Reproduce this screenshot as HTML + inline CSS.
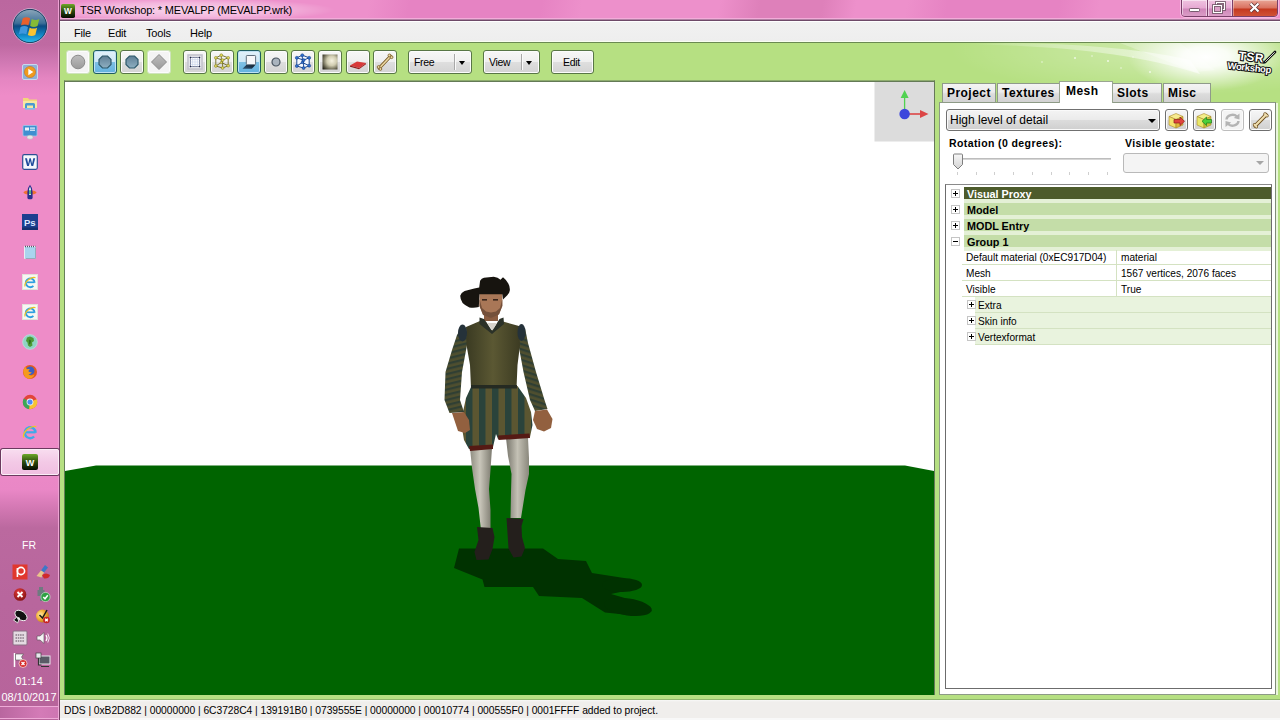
<!DOCTYPE html>
<html lang="en">
<head>
<meta charset="utf-8">
<title>TSR Workshop: * MEVALPP (MEVALPP.wrk)</title>
<style>
*{box-sizing:border-box;margin:0;padding:0}
html,body{width:1280px;height:720px;overflow:hidden;background:#fff}
body{position:relative;font-family:"Liberation Sans",sans-serif;font-size:12px;color:#000}
.abs{position:absolute}
/* taskbar */
#taskbar{position:absolute;left:0;top:0;width:59px;height:720px;
 background:linear-gradient(180deg,#bb679f 0px,#bf6aa2 45px,#d078b3 62px,#e485c1 78px,#ee8cc8 95px,#ee8cc8 440px,#e987c6 490px,#d378b3 508px,#bb699f 528px,#b8669d 600px,#b7649b 720px);}
#tbline{position:absolute;left:58px;top:0;width:2px;height:720px;background:linear-gradient(90deg,#eda2d3 0,#eda2d3 50%,#744065 50%,#744065 100%)}
/* window */
#titlebar{position:absolute;left:60px;top:0;width:1220px;height:20px;background:linear-gradient(100deg,#ed90cb 0px,#ed90cb 305px,#e683c3 345px,#e683c3 475px,#ed90cb 515px,#ed90cb 650px,#de80ba 690px,#de80ba 752px,#ed90cb 785px,#ed90cb 835px,#e683c3 875px,#e683c3 985px,#ed90cb 1025px,#ed90cb 1220px)}
#titleglow{position:absolute;left:60px;top:0;width:330px;height:19px;background:radial-gradient(ellipse 150px 12px at 125px 10px,rgba(255,255,255,.62),rgba(255,255,255,.35) 60%,rgba(255,255,255,0))}
#titleline{position:absolute;left:60px;top:18px;width:1220px;height:3px;background:linear-gradient(180deg,#f2acd9 0,#f2acd9 33.3%,#b07fa3 33.3%,#b07fa3 66.6%,#6e4a68 66.6%,#6e4a68 100%)}
#title{position:absolute;left:80px;top:3px;font-size:11px;line-height:14px;white-space:nowrap;letter-spacing:-0.19px}
#menubar{position:absolute;left:60px;top:21px;width:1220px;height:21px;background:linear-gradient(180deg,#f1f1f1,#eeeeee);border-top:1px solid #fff;border-bottom:1px solid #f8fff0}
.menu{position:absolute;top:26px;font-size:11px;line-height:14px;letter-spacing:-0.2px}
#toolbar{position:absolute;left:60px;top:42px;width:1220px;height:39px;background:#b6e082;border-top:1px solid #6a8a52}
#frameL{position:absolute;left:60px;top:43px;width:4px;height:657px;background:#b6e082}
#work{position:absolute;left:60px;top:81px;width:1220px;height:619px;background:#b6e082}
#statusbar{position:absolute;left:60px;top:699px;width:1220px;height:21px;background:linear-gradient(180deg,#f8f8f7 0,#f0eeec 2px,#f0eeec 100%);border-top:1px solid #8fb56c}
#status{position:absolute;left:64px;top:704px;font-size:10.3px;line-height:13px;white-space:nowrap;letter-spacing:-0.05px}

/* right panel */
.tab{position:absolute;top:83px;height:19px;border:1px solid #8f9a8a;border-bottom:none;background:linear-gradient(180deg,#f4f4f4 0,#ebebeb 45%,#dcdcdc 55%,#d2d2d2 100%);font-weight:bold;font-size:12px;letter-spacing:.45px;line-height:15px;padding-top:2px;padding-left:4px;text-align:left;white-space:nowrap}
.tab.sel{top:81px;height:22px;background:#fff;padding-top:2px;padding-left:6px;z-index:3;border-color:#9aa592}
#panel{position:absolute;left:939px;top:102px;width:337px;height:593px;background:#fff;border:1px solid #8d9a86;border-right-color:#7f8c78}
.ibtn{position:absolute;top:109px;width:23px;height:22px;border:1px solid #6f6f6f;border-radius:3px;background:linear-gradient(180deg,#f6f6f6 0,#ececec 48%,#dddddd 52%,#d0d0d0 100%);box-shadow:inset 0 0 0 1px #fbfbfb}
.lbl{position:absolute;font-weight:bold;font-size:10.5px;letter-spacing:.4px;line-height:13px;white-space:nowrap}
#tree{position:absolute;left:945px;top:184px;width:327px;height:505px;border:1px solid #6c6c6c;border-top-color:#8a8a8a;background:#fff}
.trow{position:absolute;left:964px;width:307px;height:16px}
.trow .bar{position:absolute;left:0;top:1px;right:0;height:12px;background:#c4dda8}
.trow .lo{position:absolute;left:0;top:13px;right:0;height:4px;background:#e4f0d6}
.trow span{position:absolute;left:3px;top:1.500px;font-weight:bold;font-size:10.8px;line-height:13px;white-space:nowrap}
.pm{position:absolute;width:9px;height:9px;border:1px solid #c5c5c5;background:#fff}
.pm:before{content:"";position:absolute;left:1px;top:3px;width:5px;height:1px;background:#000}
.pm.plus:after{content:"";position:absolute;left:3px;top:1px;width:1px;height:5px;background:#000}
.cell{position:absolute;font-size:10.1px;line-height:13px;white-space:nowrap}
.gl{position:absolute;height:1px;background:#d4e2c2}
.sub{position:absolute;left:975px;width:296px;height:15px;background:#e9f3de}

/* toolbar buttons */
.tb{position:absolute;top:50px;width:24px;height:24px;border:1px solid #587646;border-radius:3px;background:linear-gradient(180deg,#f7f7f7 0,#efefef 48%,#dedede 52%,#d3d3d3 100%);box-shadow:inset 0 0 0 1px #fcfcfc}
.tb.flat{border-color:#cfe3bd;background:#f4f4f4}
.tb.on{border-color:#1f5c60;background:linear-gradient(180deg,#e2f1fa 0,#cfe8f6 48%,#7fc0e4 52%,#62b2e0 100%);box-shadow:inset 0 0 0 1px #bfe1f3}
.tb svg{position:absolute;left:0;top:0}
.dd{position:absolute;top:50px;height:24px;border:1px solid #587646;border-radius:3px;background:linear-gradient(180deg,#f7f7f7 0,#efefef 48%,#dedede 52%,#d3d3d3 100%);box-shadow:inset 0 0 0 1px #fcfcfc;font-size:10.5px;line-height:14px;letter-spacing:-0.3px}
.dd span{position:absolute;left:5px;top:4px}
.dd i{position:absolute;top:3px;width:1px;height:16px;background:#a8a8a8;box-shadow:1px 0 0 #fafafa}
.dd b{position:absolute;top:10px;width:0;height:0;border-left:3.5px solid transparent;border-right:3.5px solid transparent;border-top:4px solid #000}

.ti{position:absolute;left:22px;width:16px;height:16px}
.tray{position:absolute;width:16px;height:16px}
.tx{position:absolute;left:0;width:58px;text-align:center;color:#fff;font-size:11px;line-height:13px;white-space:nowrap}
</style>
</head>
<body>
<div id="taskbar"></div>
<div id="tbline"></div>
<!-- taskbar content -->
<svg class="abs" style="left:11px;top:7px" width="38" height="38" viewBox="0 0 38 38"><defs><linearGradient id="orb" x1="0" y1="0" x2="0" y2="1"><stop offset="0" stop-color="#8fa9bb"/><stop offset=".42" stop-color="#3c6f98"/><stop offset=".5" stop-color="#0b4a82"/><stop offset=".8" stop-color="#1490cf"/><stop offset="1" stop-color="#33c2ea"/></linearGradient></defs>
<circle cx="19" cy="19" r="17.3" fill="url(#orb)" stroke="#d9b7d3" stroke-width="1"/><circle cx="19" cy="19" r="16.6" fill="none" stroke="#1b3f63" stroke-width="1"/>
<g transform="translate(19 19.500) scale(1.18) translate(-18.300 -18.200)"><path d="M12.2 11.2q3.2-1.6 6.2 0l-1.4 6q-3-1.4-6.3 0z" fill="#e8602c"/><path d="M19.8 11.8q3.2 1.6 6.4 0l-1.5 6q-3.2 1.6-6.3 0z" fill="#86bb35"/>
<path d="M10.3 18.6q3.2-1.6 6.3 0l-1.4 6.2q-3.2-1.5-6.4 0z" fill="#3e97de"/><path d="M18 19.2q3.2 1.6 6.3 0l-1.5 6.2q-3.1 1.6-6.3 0z" fill="#f7c331"/></g></svg>
<svg class="ti" style="top:64px" viewBox="0 0 16 16"><rect x=".5" y=".5" width="15" height="15" rx="1.5" fill="#8fb0d8" stroke="#c9d9ee"/><circle cx="8" cy="8" r="5.6" fill="#f09a1e" stroke="#c8741a" stroke-width=".6"/><polygon points="6.3,4.8 11.3,8 6.3,11.2" fill="#fff"/></svg>
<svg class="ti" style="top:95px" viewBox="0 0 16 16"><path d="M1 3h5l1.2 1.5H15V13H1z" fill="#f3d879"/><path d="M1 6h14v7H1z" fill="#f7e7a3"/><path d="M3 13V9.5q0-1.5 1.5-1.5h7q1.500 0 1.500 1.500V13h-2V10.500H5V13z" fill="#4a9ad0"/><rect x="3" y="13" width="10" height="1.6" fill="#7fc0e6"/></svg>
<svg class="ti" style="top:124px" viewBox="0 0 16 16"><rect x="1" y="1.5" width="14" height="10.5" rx="1" fill="#3f8fd0" stroke="#9cc6ea" stroke-width=".8"/><rect x="3" y="3.5" width="4" height="3" fill="#eaf3fb"/><rect x="8" y="3.500" width="5" height="1.200" fill="#eaf3fb"/><rect x="8" y="5.600" width="5" height="1.200" fill="#eaf3fb"/><ellipse cx="8" cy="13.2" rx="3" ry="2" fill="#e6e6e6" stroke="#aaa" stroke-width=".4"/></svg>
<svg class="ti" style="top:154px" viewBox="0 0 16 16"><rect x=".7" y=".7" width="14.600" height="14.600" rx="1.5" fill="#f4f7fc" stroke="#2d4f93" stroke-width="1.2"/><path d="M3 4.200h2l1.200 5.600L7.500 4.200h1.300l1.300 5.600 1.200-5.600h1.900L11.200 12H9.400L8.100 6.900 6.900 12H5.100z" fill="#1f4c9c"/></svg>
<svg class="ti" style="top:184px" viewBox="0 0 16 16"><ellipse cx="8" cy="8.500" rx="6.500" ry="2.200" fill="#f07030"/><path d="M8 .8q2.600 2.800 2.600 7.500v5.500q0 1.400-1.300 1.400H6.700q-1.300 0-1.300-1.400V8.300Q5.400 3.600 8 .8z" fill="#2a2f8e"/><path d="M8 2.500q1 1.800 1 4.500v4H7V7q0-2.700 1-4.500z" fill="#e8f4ee"/><path d="M7.200 6.200h1.600v4H7.200z" fill="#2e9e5e"/></svg>
<svg class="ti" style="top:214px" viewBox="0 0 16 16"><rect x="0" y="0" width="16" height="16" fill="#1d3f8f"/><rect x="0" y="13.500" width="16" height="2.500" fill="#16306e"/><text x="2" y="11.500" font-family="Liberation Sans,sans-serif" font-size="9.500" font-weight="bold" fill="#dfe9ff">Ps</text></svg>
<svg class="ti" style="top:244px" viewBox="0 0 16 16"><path d="M2.500 2.500h11v12h-11z" fill="#a9d4ee" stroke="#e8eef2" stroke-width="1"/><path d="M3 2.500h10.500" stroke="#556" stroke-width="1.400" stroke-dasharray="1 1"/><path d="M13.500 3.500v11h-10" stroke="#7f99aa" stroke-width=".8" fill="none"/></svg>
<svg class="ti" style="top:274px" viewBox="0 0 16 16"><rect x=".5" y=".5" width="15" height="15" fill="#f7f7f2" stroke="#e2e2da"/><path d="M12.600 8.700a4.400 4.400 0 1 0-1.200 3.100" fill="none" stroke="#2f9fe0" stroke-width="1.900"/><path d="M5 8.300h7.500" stroke="#2f9fe0" stroke-width="1.700"/><path d="M3 12.500q-1-3.500 4-7.200 4-2.600 6.500-1.600" fill="none" stroke="#f0c020" stroke-width="1.100"/></svg>
<svg class="ti" style="top:304px" viewBox="0 0 16 16"><rect x=".5" y=".5" width="15" height="15" fill="#f7f7f2" stroke="#e2e2da"/><path d="M12.600 8.700a4.400 4.400 0 1 0-1.200 3.100" fill="none" stroke="#2f9fe0" stroke-width="1.900"/><path d="M5 8.300h7.500" stroke="#2f9fe0" stroke-width="1.700"/><path d="M3 12.500q-1-3.500 4-7.200 4-2.600 6.500-1.600" fill="none" stroke="#f0c020" stroke-width="1.100"/></svg>
<svg class="ti" style="top:334px" viewBox="0 0 16 16"><circle cx="8" cy="8" r="7.300" fill="#8fd3c4" stroke="#b9e3da" stroke-width=".8"/><path d="M5 3.500l3-1 3.500 1.500.5 3-2 1.500.5 3L8 13l-2-1.500-.5-3L4 7z" fill="#4c9a34"/><path d="M7 5.500l2 1-.5 3-1.500 1z" fill="#2e6e20"/></svg>
<svg class="ti" style="top:364px" viewBox="0 0 16 16"><circle cx="8" cy="8" r="7" fill="#e55b1d"/><circle cx="8.200" cy="6.800" r="4.300" fill="#3c5fc4"/><path d="M1.200 7q.3-3 2.500-4.800Q3.500 4 5 5.200 6.500 4.600 8 5.200 6.200 6 6.500 7.500 8 8.500 9.800 8q-1 2.200-3.300 2.200Q9 12.500 12.500 10.500q-1.800 4.300-5.800 4.300Q1.800 14.300 1.200 7z" fill="#f59a1e"/></svg>
<svg class="ti" style="top:394px" viewBox="0 0 16 16"><circle cx="8" cy="8" r="7.200" fill="#e2453a"/><path d="M8 8L1.800 4.400A7.200 7.200 0 0 0 7.200 15.200z" fill="#3aa757"/><path d="M8 8L7.200 15.200A7.200 7.200 0 0 0 14.600 5z" fill="#f6c433"/><path d="M8 8L14.600 5 8 5z" fill="#e2453a"/><circle cx="8" cy="8" r="3.400" fill="#f4f4f4"/><circle cx="8" cy="8" r="2.600" fill="#4a8af4"/></svg>
<svg class="ti" style="top:424px" viewBox="0 0 16 16"><path d="M13.600 8.800a5.400 5.400 0 1 0-1.500 3.700" fill="none" stroke="#3fa9e8" stroke-width="2.500"/><path d="M4 8.300h9.500" stroke="#3fa9e8" stroke-width="2.200"/><path d="M1.800 13.500q-1.500-4 4.200-8.700 4.800-3.400 8.300-2.200" fill="none" stroke="#f3c325" stroke-width="1.300"/></svg>
<div class="abs" style="left:1px;top:449px;width:58px;height:26px;border:1px solid #fbeef7;border-radius:2px;background:linear-gradient(180deg,#f8dcef 0,#f3c9e6 50%,#f0bfe1 100%);box-shadow:0 0 0 1px #6a3a5e"></div>
<svg class="ti" style="top:454px" viewBox="0 0 16 16"><defs><linearGradient id="wg" x1="0" y1="0" x2="0" y2="1"><stop offset="0" stop-color="#6da82a"/><stop offset=".5" stop-color="#2c4a0c"/><stop offset="1" stop-color="#050a02"/></linearGradient></defs><rect x="0" y="0" width="16" height="16" rx="2" fill="url(#wg)"/><text x="8" y="11.500" text-anchor="middle" font-family="Liberation Sans,sans-serif" font-size="9" font-weight="bold" fill="#fff">W</text></svg>
<div class="tx" style="top:539px;font-size:10.500px">FR</div>
<svg class="tray" style="left:12px;top:564px" viewBox="0 0 16 16"><rect x=".5" y=".5" width="15" height="15" fill="#e0382e"/><circle cx="9" cy="7" r="3.600" fill="none" stroke="#fff" stroke-width="1.600"/><path d="M5.400 4v9" stroke="#fff" stroke-width="1.600"/></svg>
<svg class="tray" style="left:35px;top:564px" viewBox="0 0 16 16"><path d="M10 1l3 2.500-4 5-3-2z" fill="#3d78c8"/><path d="M6 6.500l3 2-2.500 5-5-1.500z" fill="#e8c48a"/><path d="M7 11q4-3 8 0-1 4-6 3.500z" fill="#d02a2a"/></svg>
<svg class="tray" style="left:12px;top:586px" viewBox="0 0 16 16"><defs><radialGradient id="rx" cx=".4" cy=".3" r=".8"><stop offset="0" stop-color="#e23a3a"/><stop offset="1" stop-color="#7c0e0e"/></radialGradient></defs><circle cx="8" cy="8.500" r="6.300" fill="url(#rx)"/><path d="M5.500 6l5 5M10.500 6l-5 5" stroke="#fff" stroke-width="1.900"/></svg>
<svg class="tray" style="left:35px;top:586px" viewBox="0 0 16 16"><path d="M4 1h4v3h1.500v6H7v5H5v-5H2.500V4H4z" fill="#6f7a80"/><circle cx="10.500" cy="11" r="4.600" fill="#2ea043" stroke="#d8f0dc" stroke-width=".6"/><path d="M8.300 11l1.700 1.800 2.800-3.600" stroke="#fff" stroke-width="1.500" fill="none"/></svg>
<svg class="tray" style="left:12px;top:608px" viewBox="0 0 16 16"><g transform="rotate(35 8 8)"><ellipse cx="8.500" cy="7" rx="6.800" ry="4.200" fill="#111" stroke="#f2f2f2" stroke-width=".9"/><path d="M6 10.500l-1 4.500h5l-1-4.500z" fill="#111" stroke="#f2f2f2" stroke-width=".8"/></g><circle cx="6.500" cy="10.500" r="1.300" fill="#f2f2f2"/></svg>
<svg class="tray" style="left:35px;top:608px" viewBox="0 0 16 16"><defs><radialGradient id="yo" cx=".35" cy=".4" r=".75"><stop offset="0" stop-color="#ffe9a0"/><stop offset=".5" stop-color="#f0ac30"/><stop offset="1" stop-color="#a8621a"/></radialGradient></defs><circle cx="7.500" cy="8" r="6.500" fill="url(#yo)"/><path d="M4.500 7l3 3 4.500-8" stroke="#1a1a1a" stroke-width="1.500" fill="none"/><circle cx="11.500" cy="12" r="3.300" fill="#c82222"/><path d="M10.200 10.700l2.600 2.600M12.800 10.700l-2.600 2.600" stroke="#fff" stroke-width="1.300"/></svg>
<svg class="tray" style="left:12px;top:630px" viewBox="0 0 16 16"><rect x="1" y="1" width="14" height="14" rx="1" fill="#e4dbe2" stroke="#8a6f84" stroke-width="1"/><path d="M3.500 5h9M3.500 8h9M3.500 11h9" stroke="#5a4a58" stroke-width="1.200" stroke-dasharray="1.500 .8"/></svg>
<svg class="tray" style="left:35px;top:630px" viewBox="0 0 16 16"><path d="M2 6h3l4-3.500v11L5 10H2z" fill="#f4f4f4" stroke="#6a5a66" stroke-width=".7"/><path d="M11 5q2 3 0 6" stroke="#fff" stroke-width="1.200" fill="none"/><path d="M12.800 3.500q3 4.500 0 9" stroke="#f2e2ee" stroke-width="1" fill="none"/></svg>
<svg class="tray" style="left:12px;top:652px" viewBox="0 0 16 16"><path d="M2.500 1v14" stroke="#fff" stroke-width="1.500"/><path d="M3.500 2h8l-2 3 2 3h-8z" fill="#f6f6f6" stroke="#555" stroke-width=".6"/><circle cx="11" cy="11.500" r="4" fill="#d62b2b" stroke="#fff" stroke-width=".6"/><path d="M9.500 10l3 3M12.500 10l-3 3" stroke="#fff" stroke-width="1.300"/></svg>
<svg class="tray" style="left:35px;top:652px" viewBox="0 0 16 16"><rect x="4" y="4" width="11" height="8" fill="#5a5a66" stroke="#e8e8ee" stroke-width="1"/><rect x="1" y="1" width="5" height="5" fill="#e8e8ee" stroke="#444" stroke-width=".7"/><path d="M6 14.500h8M3.500 6v7h3" stroke="#333" stroke-width="1.200" fill="none"/></svg>
<div class="tx" style="top:675px;font-size:11px">01:14</div>
<div class="tx" style="top:691px;font-size:11px">08/10/2017</div>
<div class="abs" style="left:-1px;top:706px;width:60px;height:13px;border:1px solid #eeaad7;background:linear-gradient(90deg,#b9669f 0,#d47bb7 70%,#ce76b2 100%)"></div>
<div id="titlebar"></div>
<div id="titleglow"></div>
<div id="titleline"></div>
<div id="title">TSR Workshop: * MEVALPP (MEVALPP.wrk)</div>

<!-- app icon -->
<svg class="abs" style="left:61px;top:4px" width="14" height="14" viewBox="0 0 16 16"><rect x="0" y="0" width="16" height="16" rx="2" fill="url(#wg)"/><text x="8" y="11.5" text-anchor="middle" font-family="Liberation Sans,sans-serif" font-size="9.5" font-weight="bold" fill="#fff">W</text></svg>
<!-- caption buttons -->
<div class="abs" style="left:1181px;top:-1px;width:97px;height:18px;border:1px solid #7a3f6a;border-radius:0 0 4px 4px;box-shadow:0 0 0 1px rgba(255,225,245,.55);overflow:hidden">
 <div class="abs" style="left:0;top:0;width:26px;height:17px;background:linear-gradient(180deg,#efc3e0 0,#e6a8d2 48%,#cf86b9 52%,#dca0c8 100%);border-right:1px solid #7a3f6a;box-shadow:inset 0 0 0 1px rgba(255,255,255,.5)"></div>
 <div class="abs" style="left:26px;top:0;width:25px;height:17px;background:linear-gradient(180deg,#efc3e0 0,#e6a8d2 48%,#cf86b9 52%,#dca0c8 100%);border-right:1px solid #7a3f6a;box-shadow:inset 0 0 0 1px rgba(255,255,255,.5)"></div>
 <div class="abs" style="left:51px;top:0;width:45px;height:17px;background:linear-gradient(180deg,#e9a596 0,#d9705e 48%,#c4381f 52%,#d2563a 100%);box-shadow:inset 0 0 0 1px rgba(255,255,255,.35)"></div>
</div>
<svg class="abs" style="left:1181px;top:0" width="97" height="17" viewBox="0 0 97 17">
 <rect x="8.500" y="8.500" width="10" height="3" rx=".8" fill="#fff" stroke="#5a4050" stroke-width=".8"/>
 <rect x="35.500" y="2.500" width="8" height="7" fill="none" stroke="#5a4050" stroke-width="2.600"/><rect x="35.500" y="2.500" width="8" height="7" fill="none" stroke="#fff" stroke-width="1.200"/>
 <rect x="32.500" y="5.500" width="8" height="7" fill="#dca0c8" stroke="#5a4050" stroke-width="2.600"/><rect x="32.500" y="5.500" width="8" height="7" fill="none" stroke="#fff" stroke-width="1.200"/>
 <path d="M69.500 3.500l8 8M77.500 3.500l-8 8" stroke="#5a3030" stroke-width="3.600"/><path d="M69.500 3.500l8 8M77.500 3.500l-8 8" stroke="#fff" stroke-width="2.200"/>
</svg>
<div id="menubar"></div>
<div class="menu" style="left:74px">File</div>
<div class="menu" style="left:108px">Edit</div>
<div class="menu" style="left:146px">Tools</div>
<div class="menu" style="left:190px">Help</div>
<div id="toolbar"></div>
<div id="work"></div>

<svg class="abs" style="left:900px;top:43px" width="380" height="60" viewBox="900 43 380 60">
<defs>
<radialGradient id="glow" cx="0" cy="0" r="1" gradientUnits="userSpaceOnUse" gradientTransform="translate(1206 57) scale(78 34)"><stop offset="0" stop-color="#fff" stop-opacity="1"/><stop offset=".3" stop-color="#fff" stop-opacity=".9"/><stop offset=".6" stop-color="#fff" stop-opacity=".5"/><stop offset="1" stop-color="#fff" stop-opacity="0"/></radialGradient>
<radialGradient id="glow2" cx="0" cy="0" r="1" gradientUnits="userSpaceOnUse" gradientTransform="translate(1180 50) scale(230 45)"><stop offset="0" stop-color="#fff" stop-opacity=".35"/><stop offset="1" stop-color="#fff" stop-opacity="0"/></radialGradient>
<linearGradient id="sw" x1="0" x2="1"><stop offset="0" stop-color="#fff" stop-opacity="0"/><stop offset=".4" stop-color="#fff" stop-opacity=".3"/><stop offset="1" stop-color="#fff" stop-opacity=".55"/></linearGradient>
</defs>
<rect x="900" y="43" width="380" height="60" fill="url(#glow2)"/>
<path d="M960 44 C1060 46 1130 52 1200 74 L1190 60 C1130 47 1070 44 1010 43z" fill="url(#sw)"/>
<path d="M1120 43 L1180 43 L1215 70 L1195 72z" fill="#fff" opacity=".25"/>
<rect x="1100" y="43" width="180" height="60" fill="url(#glow)"/>
<g fill="#fff" opacity=".7"><circle cx="1075" cy="58" r="1"/><circle cx="1092" cy="56" r=".8"/><circle cx="1108" cy="61" r="1.100"/><circle cx="1121" cy="68" r=".8"/><circle cx="1150" cy="72" r="1"/><circle cx="1042" cy="62" r=".8"/><circle cx="1133" cy="57" r=".7"/></g>
<g font-family="Liberation Sans,sans-serif" font-weight="bold" transform="rotate(6 1250 62)">
<text x="1238" y="61" font-size="12" fill="#fff" stroke="#111" stroke-width="2.200" paint-order="stroke" letter-spacing=".5">TSR</text>
<text x="1228" y="71" font-size="9.500" fill="#fff" stroke="#111" stroke-width="2" paint-order="stroke" letter-spacing="-.3">Workshop</text>
</g>
<path d="M1265 62 L1275 52" stroke="#111" stroke-width="2.600" stroke-linecap="round"/><path d="M1265.500 61.500 L1274.500 52.500" stroke="#d8d8d8" stroke-width="1" stroke-linecap="round"/>
</svg>
<!-- toolbar buttons -->
<div class="tb flat" style="left:66px"><svg width="22" height="22" viewBox="0 0 22 22"><defs><linearGradient id="gry" x1="0" y1="0" x2="0" y2="1"><stop offset="0" stop-color="#bdbdbd"/><stop offset="1" stop-color="#9a9a9a"/></linearGradient><linearGradient id="blu" x1="0" y1="0" x2="0" y2="1"><stop offset="0" stop-color="#5f7f95"/><stop offset="1" stop-color="#8fb0c2"/></linearGradient></defs><circle cx="11" cy="11" r="6.8" fill="url(#gry)" stroke="#8c8c8c" stroke-width="1"/></svg></div>
<div class="tb on" style="left:93px"><svg width="22" height="22" viewBox="0 0 22 22"><polygon points="8.500,5 13.500,5 17,8.500 17,13.500 13.500,17 8.500,17 5,13.500 5,8.500" fill="url(#blu)" stroke="#2f5a6c" stroke-width="1.2"/></svg></div>
<div class="tb" style="left:120px"><svg width="22" height="22" viewBox="0 0 22 22"><polygon points="8.500,5 13.500,5 17,8.500 17,13.500 13.500,17 8.500,17 5,13.500 5,8.500" fill="url(#blu)" stroke="#2f5a6c" stroke-width="1.2"/></svg></div>
<div class="tb flat" style="left:147px"><svg width="22" height="22" viewBox="0 0 22 22"><polygon points="11,3.5 18.5,11 11,18.5 3.5,11" fill="url(#gry)" stroke="#8c8c8c" stroke-width="1"/></svg></div>
<div class="tb" style="left:183px"><svg width="22" height="22" viewBox="0 0 22 22"><rect x="4" y="4" width="14" height="14" fill="#ededf1" stroke="#c2c2cc" stroke-width="1.600"/><rect x="6.300" y="6.300" width="9.400" height="9.400" fill="#fff" stroke="#3a4266" stroke-width=".7"/><path d="M8.650 6.300v9.400M11 6.300v9.400M13.350 6.300v9.400M6.300 8.650h9.400M6.300 11h9.400M6.300 13.350h9.400" stroke="#b9c6e6" stroke-width=".5"/><g fill="#1e2440"><rect x="5.800" y="5.800" width="1.200" height="1.200"/><rect x="15" y="5.800" width="1.200" height="1.200"/><rect x="5.800" y="15" width="1.200" height="1.200"/><rect x="15" y="15" width="1.200" height="1.200"/></g></svg></div>
<div class="tb" style="left:210px"><svg width="22" height="22" viewBox="0 0 22 22"><path d="M4.800 6.800L10.300 4.200L17.200 6.800L17.200 14.700L11.600 17L4.800 15zM4.800 6.800L11.600 9.100L17.200 6.800M11.600 9.100V17M10.300 4.200V11.500L4.800 15M10.300 11.500L17.200 14.700" fill="none" stroke="#6e6a1e" stroke-width=".9"/><g fill="#e2da5a" stroke="#7a741e" stroke-width=".5"><circle cx="4.800" cy="6.800" r="1.400"/><circle cx="10.300" cy="4.200" r="1.400"/><circle cx="17.200" cy="6.800" r="1.400"/><circle cx="11.600" cy="9.100" r="1.400"/><circle cx="4.800" cy="15" r="1.400"/><circle cx="11.600" cy="17" r="1.400"/><circle cx="17.200" cy="14.700" r="1.400"/><circle cx="10.300" cy="11.500" r="1.100"/></g></svg></div>
<div class="tb on" style="left:237px"><svg width="22" height="22" viewBox="0 0 22 22"><defs><linearGradient id="shd" x1="1" y1="0" x2="0" y2="1"><stop offset="0" stop-color="#0a1422"/><stop offset="1" stop-color="#1d3a56" stop-opacity=".75"/></linearGradient></defs><polygon points="4.500,17.800 13.900,17.800 17.300,14 8.300,14" fill="url(#shd)"/><rect x="8.300" y="4.500" width="9.300" height="9.200" rx=".8" fill="#f6f7f9" stroke="#5f6e7c" stroke-width="1"/></svg></div>
<div class="tb" style="left:264px"><svg width="22" height="22" viewBox="0 0 22 22"><circle cx="11" cy="11" r="4" fill="#aab4be" stroke="#4a5560" stroke-width="1.2"/></svg></div>
<div class="tb" style="left:291px"><svg width="22" height="22" viewBox="0 0 22 22"><path d="M4.800 6.800L10.300 4.200L17.200 6.800L17.200 14.700L11.600 17L4.800 15z" fill="#f4f8ff" stroke="none"/><path d="M4.800 6.800L10.300 4.200L17.200 6.800L17.200 14.700L11.600 17L4.800 15zM4.800 6.800L11.600 9.100L17.200 6.800M11.600 9.100V17M10.300 4.200V11.500L4.800 15M10.300 11.500L17.200 14.700" fill="none" stroke="#1c4a94" stroke-width="1"/><g fill="#2f6fd0" stroke="#123a7c" stroke-width=".5"><circle cx="4.800" cy="6.800" r="1.500"/><circle cx="10.300" cy="4.200" r="1.500"/><circle cx="17.200" cy="6.800" r="1.500"/><circle cx="11.600" cy="9.100" r="1.500"/><circle cx="4.800" cy="15" r="1.500"/><circle cx="11.600" cy="17" r="1.500"/><circle cx="17.200" cy="14.700" r="1.500"/><circle cx="10.300" cy="11.500" r="1.200"/></g></svg></div>
<div class="tb" style="left:318px"><svg width="22" height="22" viewBox="0 0 22 22"><defs><radialGradient id="lamp" cx=".62" cy=".42" r=".8"><stop offset="0" stop-color="#f6f2e0"/><stop offset=".4" stop-color="#d0ccb0"/><stop offset=".8" stop-color="#55523f"/><stop offset="1" stop-color="#1c1a14"/></radialGradient></defs><rect x="3.5" y="3.5" width="15" height="15" fill="url(#lamp)"/></svg></div>
<div class="tb" style="left:346px"><svg width="22" height="22" viewBox="0 0 22 22"><polygon points="3,14.5 10,10.5 19,12 12,17" fill="#d83a3a"/><polygon points="3,14.5 12,17 12,18.2 3,15.7" fill="#8e1c1c"/><polygon points="12,17 19,12 19,13.2 12,18.2" fill="#a82424"/></svg></div>
<div class="tb" style="left:373px"><svg width="22" height="22" viewBox="0 0 22 22"><path d="M5.2 17.2L16.6 5.2" stroke="#7a5c28" stroke-width="3.2" stroke-linecap="round"/><path d="M5.2 17.2L16.6 5.2" stroke="#ecd9a4" stroke-width="1.600" stroke-linecap="round"/><circle cx="4.6" cy="16" r="1.400" fill="#ecd9a4" stroke="#7a5c28" stroke-width=".8"/><circle cx="6.4" cy="18" r="1.400" fill="#ecd9a4" stroke="#7a5c28" stroke-width=".8"/><circle cx="15.4" cy="4.4" r="1.400" fill="#ecd9a4" stroke="#7a5c28" stroke-width=".8"/><circle cx="17.6" cy="6.2" r="1.400" fill="#ecd9a4" stroke="#7a5c28" stroke-width=".8"/></svg></div>
<div class="dd" style="left:408px;width:64px"><span>Free</span><i style="left:45px"></i><b style="left:50px"></b></div>
<div class="dd" style="left:483px;width:57px"><span>View</span><i style="left:37px"></i><b style="left:42px"></b></div>
<div class="dd" style="left:551px;width:43px"><span style="left:11px">Edit</span></div>

<div id="frameL"></div>
<!-- 3D viewport -->
<div id="vpframe" class="abs" style="left:64px;top:80px;width:871px;height:615px;background:#fff;border-left:1px solid #66805a;border-top:1px solid #8eac6e;border-right:1px solid #66785a"></div>
<div class="abs" style="left:64px;top:81px;width:871px;height:1px;background:#647a56"></div>
<svg id="vp" class="abs" style="left:65px;top:82px" width="869" height="613" viewBox="65 82 869 613">
<rect x="65" y="81" width="869" height="614" fill="#ffffff"/>
<!-- floor -->
<polygon points="65,471 96,465.5 905,465.5 934,471 934,695 65,695" fill="#006400"/>
<!-- gizmo box -->
<rect x="874.5" y="82" width="59.5" height="59.5" fill="#dcdcdc"/>
<line x1="904.6" y1="110" x2="904.6" y2="96" stroke="#50d250" stroke-width="1.3"/>
<polygon points="904.6,90 908.6,98 900.6,98" fill="#50d250"/>
<line x1="908" y1="114" x2="921" y2="114" stroke="#dc4646" stroke-width="1.6"/>
<polygon points="928.5,114 920,110 920,118" fill="#dc4646"/>
<circle cx="904.6" cy="114" r="5.2" fill="#3c46dc"/>
<!-- shadow -->
<polygon fill="#003200" points="459,548.5 543,548.5 558,559 586,561 592,573 624,578 641,585 625,591 611,594 642,603 652,611 634,615.5 605,612.5 582,598 539,596 533,587 484.5,587 482.5,579.5 454,568"/>
<ellipse cx="622" cy="585" rx="20" ry="7" fill="#003200"/><ellipse cx="628" cy="607" rx="24" ry="8.500" fill="#003200" transform="rotate(8 628 607)"/>
<g id="character">
<defs>
<linearGradient id="legL" x1="0" x2="1"><stop offset="0" stop-color="#8e8c80"/><stop offset=".45" stop-color="#c9c6ba"/><stop offset="1" stop-color="#7d7b70"/></linearGradient>
<linearGradient id="legR" x1="0" x2="1"><stop offset="0" stop-color="#77756b"/><stop offset=".5" stop-color="#c4c1b5"/><stop offset="1" stop-color="#8a887c"/></linearGradient>
<linearGradient id="vest" x1="0" x2="1"><stop offset="0" stop-color="#3a3a22"/><stop offset=".5" stop-color="#5b5833"/><stop offset="1" stop-color="#3c3b22"/></linearGradient>
<pattern id="stripeV" width="13" height="10" patternUnits="userSpaceOnUse" x="466"><rect width="13" height="10" fill="#5b5631"/><rect width="6.5" height="10" fill="#2a433b"/></pattern>
<pattern id="stripeH" width="10" height="5" patternUnits="userSpaceOnUse" patternTransform="rotate(-14)"><rect width="10" height="5" fill="#4f4f2f"/><rect width="10" height="2.3" fill="#303f33"/></pattern>
<pattern id="stripeH2" width="10" height="5" patternUnits="userSpaceOnUse" patternTransform="rotate(18)"><rect width="10" height="5" fill="#4f4f2f"/><rect width="10" height="2.3" fill="#303f33"/></pattern>
</defs>
<!-- legs -->
<polygon fill="url(#legL)" points="470,448 492,448 490.5,470 489,489 490.5,510 490.5,530 481,530 478.5,508 475,489 472,468"/>
<polygon fill="url(#legR)" points="506,438 528,438 529,458 529,474 525.5,490 521,518 510.5,518 511,492 511.5,474 508,456"/>
<!-- shoes -->
<polygon fill="#241f1c" points="477,527 492.5,528 494.5,537 492.5,549 488.5,559.5 476.5,560 474.5,552 478.5,540"/>
<polygon fill="#241f1c" points="506.5,518 523.5,519 521.5,526 522,537 525,548 521.5,556.5 513.5,557.5 508.5,548.5 507.5,533"/>
<!-- breeches -->
<polygon fill="url(#stripeV)" points="471.5,386 517.5,386 526,398 531,412 532.500,425 530,437 498,439 496,434 493,447 469,449 464,440 462,428 462.500,414 466,398"/>
<polygon fill="#551a14" points="469,446 493,444.5 493,449 470,451"/>
<polygon fill="#551a14" points="498,435.5 529.5,433.5 530,438 498.5,440"/>
<!-- arms -->
<polygon fill="url(#stripeH)" points="461,328 468,332 467,345 462,372 460,400 464,412 449.5,413 444.5,400 445.5,372 452,350 457,335"/>
<polygon fill="url(#stripeH2)" points="519,326 525,328 528,343 536,372 544.5,400 547.5,409 535,411 530,400 523.5,372 518.5,345"/>
<!-- hands -->
<polygon fill="#92603f" points="452,413 464,412 469,420 470,430 465,433 458,431 455,422"/>
<polygon fill="#92603f" points="535,411 547,409.5 552.5,419 551,428 544,431.5 537,429 533,420"/>
<!-- torso vest -->
<polygon fill="url(#vest)" points="466,327 480,321 490,331 503,321.5 519,326 520,345 517.5,365 516.5,388 471,388 470,365 466.5,345"/>
<rect x="471" y="385" width="46" height="3.5" fill="#252a22"/>
<!-- shoulder puffs -->
<ellipse cx="462.500" cy="333" rx="4.500" ry="8.500" fill="#25323a"/>
<ellipse cx="521.500" cy="332.500" rx="4" ry="8.500" fill="#25323a"/>
<!-- collar / shirt -->
<polygon fill="#8a5c40" points="484,312 498,312 498,321 484,321"/>
<polygon fill="#2b3128" points="479.500,317.500 484,319 487,323 492,331 497,323 499.500,319 503.500,317.500 504,324 492,334 479.500,324"/>
<polygon fill="#d8d4cc" points="487,323 497,323 492.5,330.5"/>
<!-- face -->
<polygon fill="#a97757" points="479.500,294 502.300,294 502.300,306 499,314 491,317.500 483,314.500 479.500,306"/>
<polygon fill="#74503a" points="479.500,299 482,308 486,311.500 491,312.500 496,311.500 500,308 502.300,299 502.300,306 499,314.500 491,318 483,315 479.500,306"/>
<rect x="482" y="299" width="5" height="1.6" fill="#3a261c"/><rect x="493" y="299" width="5" height="1.6" fill="#3a261c"/>
<!-- hat -->
<path fill="#17140f" d="M460.200,295.800 Q461,292.500 464.600,290.900 L474.300,288.500 L479.200,287.500 L480.100,280.700 Q481.500,278.300 484,277.800 L493.700,276.800 Q498,277.500 500.500,279.700 L503,277.300 Q506.500,280 508.300,283.600 Q510.200,287 509.800,290.400 Q509.200,293.500 507.300,295.300 L503,299.500 L502.300,294.300 L479.500,294.300 L478.800,307 Q474,308.200 469.400,307.400 Q465,305.500 462.600,303 Q460.200,299.500 460.200,295.800Z"/>
</g>
</svg>


<!-- right panel -->
<div class="abs" style="left:1276px;top:103px;width:2px;height:592px;background:#e9f5dc"></div><div id="panel"></div>
<div class="tab" style="left:942px;width:54px">Project</div>
<div class="tab" style="left:997px;width:63px">Textures</div>
<div class="tab sel" style="left:1059px;width:54px">Mesh</div>
<div class="tab" style="left:1112px;width:50px">Slots</div>
<div class="tab" style="left:1163px;width:48px">Misc</div>
<div id="lod" class="abs" style="left:946px;top:109px;width:214px;height:22px;border:1px solid #707070;border-radius:3px;background:linear-gradient(180deg,#f4f4f4 0,#ebebeb 48%,#dcdcdc 52%,#cfcfcf 100%);box-shadow:inset 0 0 0 1px #fafafa"></div>
<div class="abs" style="left:950px;top:113px;font-size:12px;line-height:14px;white-space:nowrap">High level of detail</div>
<div class="abs" style="left:1148px;top:119px;width:0;height:0;border-left:4px solid transparent;border-right:4px solid transparent;border-top:4px solid #000"></div>
<div class="ibtn" style="left:1165px"><svg width="21" height="20" viewBox="0 0 21 20" style="position:absolute;left:0;top:0"><polygon points="3,6.500 10,3.500 17,6.500 10,9.500" fill="#f7ea8e" stroke="#a8882a" stroke-width=".6"/><polygon points="3,6.500 10,9.500 10,18 3,15" fill="#f5e36c" stroke="#a8882a" stroke-width=".6"/><polygon points="17,6.500 10,9.500 10,18 17,15" fill="#e2b83a" stroke="#a8882a" stroke-width=".6"/><path d="M8 9.500h6V7l4.500 4.300L14 15.600V13H8z" fill="#e0443e" stroke="#8e1c1c" stroke-width=".7"/></svg></div>
<div class="ibtn" style="left:1193px"><svg width="21" height="20" viewBox="0 0 21 20" style="position:absolute;left:0;top:0"><polygon points="3,6.500 10,3.500 17,6.500 10,9.500" fill="#f3ee8a" stroke="#a8882a" stroke-width=".6"/><polygon points="3,6.500 10,9.500 10,18 3,15" fill="#e8e86a" stroke="#a8882a" stroke-width=".6"/><polygon points="17,6.500 10,9.500 10,18 17,15" fill="#c8c23c" stroke="#a8882a" stroke-width=".6"/><path d="M17.500 9.500h-5V7L8 11.300l4.500 4.300V13h5z" fill="#4cd03c" stroke="#1e7a1a" stroke-width=".7"/></svg></div>
<div class="ibtn" style="left:1221px;border-color:#bdbdbd;background:#f4f4f4"><svg width="21" height="20" viewBox="0 0 21 20" style="position:absolute;left:0;top:0"><path d="M4.500 9.500a6 5 0 0 1 10.500-3" fill="none" stroke="#b4b4b4" stroke-width="2.400"/><polygon points="17.500,3.500 17.500,9.500 11.800,8" fill="#b4b4b4"/><path d="M16.500 11a6 5 0 0 1-10.500 3" fill="none" stroke="#b4b4b4" stroke-width="2.400"/><polygon points="3.500,17 3.500,11 9.200,12.500" fill="#b4b4b4"/></svg></div>
<div class="ibtn" style="left:1249px"><svg width="21" height="20" viewBox="0 0 21 20" style="position:absolute;left:0;top:0"><path d="M5.200 15.800L16 4.800" stroke="#6e5020" stroke-width="3.800" stroke-linecap="round"/><circle cx="4.500" cy="14.800" r="1.700" fill="#6e5020"/><circle cx="6.300" cy="16.800" r="1.700" fill="#6e5020"/><circle cx="15" cy="4" r="1.700" fill="#6e5020"/><circle cx="17" cy="5.800" r="1.700" fill="#6e5020"/><path d="M5.200 15.800L16 4.800" stroke="#f0dfb0" stroke-width="2" stroke-linecap="round"/><circle cx="4.500" cy="14.800" r="1" fill="#f0dfb0"/><circle cx="6.300" cy="16.800" r="1" fill="#f0dfb0"/><circle cx="15" cy="4" r="1" fill="#f0dfb0"/><circle cx="17" cy="5.800" r="1" fill="#f0dfb0"/></svg></div>
<div class="lbl" style="left:949px;top:137px">Rotation (0 degrees):</div>
<div class="lbl" style="left:1125px;top:137px">Visible geostate:</div>
<div class="abs" style="left:958px;top:158px;width:153px;height:2px;background:#d6d6d6;border-top:1px solid #bdbdbd"></div>
<svg class="abs" style="left:953px;top:153px" width="10" height="17" viewBox="0 0 10 17"><defs><linearGradient id="thg" x1="0" y1="0" x2="0" y2="1"><stop offset="0" stop-color="#f8f8f8"/><stop offset="1" stop-color="#d2d2d2"/></linearGradient></defs><path d="M1.500 1h7q1 0 1 1v9.500l-4.500 4.500l-4.500-4.500V2q0-1 1-1z" fill="url(#thg)" stroke="#7e7e7e" stroke-width="1"/></svg>
<div class="abs" style="left:957px;top:172px;width:1px;height:3px;background:#cfcfcf"></div><div class="abs" style="left:976px;top:172px;width:1px;height:3px;background:#cfcfcf"></div><div class="abs" style="left:994px;top:172px;width:1px;height:3px;background:#cfcfcf"></div><div class="abs" style="left:1013px;top:172px;width:1px;height:3px;background:#cfcfcf"></div><div class="abs" style="left:1032px;top:172px;width:1px;height:3px;background:#cfcfcf"></div><div class="abs" style="left:1051px;top:172px;width:1px;height:3px;background:#cfcfcf"></div><div class="abs" style="left:1069px;top:172px;width:1px;height:3px;background:#cfcfcf"></div><div class="abs" style="left:1088px;top:172px;width:1px;height:3px;background:#cfcfcf"></div><div class="abs" style="left:1107px;top:172px;width:1px;height:3px;background:#cfcfcf"></div>
<div class="abs" style="left:1123px;top:153px;width:146px;height:20px;border:1px solid #b9b9b9;border-radius:3px;background:#f4f4f4"></div>
<div class="abs" style="left:1256px;top:161px;width:0;height:0;border-left:4px solid transparent;border-right:4px solid transparent;border-top:4px solid #a5a5a5"></div>
<div id="tree"></div>
<div class="trow" style="top:186px"><div class="bar" style="background:#4d5b2b"></div><div class="lo"></div><span style="color:#fff">Visual Proxy</span></div>
<div class="trow" style="top:202px"><div class="bar"></div><div class="lo"></div><span>Model</span></div>
<div class="trow" style="top:218px"><div class="bar"></div><div class="lo"></div><span>MODL Entry</span></div>
<div class="trow" style="top:234px"><div class="bar"></div><div class="lo"></div><span>Group 1</span></div>
<div class="pm plus" style="left:951px;top:189px"></div>
<div class="pm plus" style="left:951px;top:205px"></div>
<div class="pm plus" style="left:951px;top:221px"></div>
<div class="pm" style="left:951px;top:237px"></div>
<div class="cell" style="left:966px;top:251px">Default material (0xEC917D04)</div>
<div class="cell" style="left:1121px;top:251px">material</div>
<div class="cell" style="left:966px;top:267px">Mesh</div>
<div class="cell" style="left:1121px;top:267px">1567 vertices, 2076 faces</div>
<div class="cell" style="left:966px;top:283px">Visible</div>
<div class="cell" style="left:1121px;top:283px">True</div>
<div class="gl" style="left:962px;top:264px;width:309px"></div>
<div class="gl" style="left:962px;top:280px;width:309px"></div>
<div class="gl" style="left:962px;top:296px;width:309px"></div>
<div class="abs" style="left:1116px;top:250px;width:1px;height:47px;background:#d4e2c2"></div>
<div class="sub" style="top:297px"></div>
<div class="sub" style="top:313px"></div>
<div class="sub" style="top:329px"></div>
<div class="gl" style="left:975px;top:312px;width:296px"></div>
<div class="gl" style="left:975px;top:328px;width:296px"></div>
<div class="gl" style="left:975px;top:344px;width:296px"></div>
<div class="pm plus" style="left:967px;top:300px"></div>
<div class="pm plus" style="left:967px;top:316px"></div>
<div class="pm plus" style="left:967px;top:332px"></div>
<div class="cell" style="left:978px;top:299px">Extra</div>
<div class="cell" style="left:978px;top:315px">Skin info</div>
<div class="cell" style="left:978px;top:331px">Vertexformat</div>
<div id="statusbar"></div><div class="abs" style="left:60px;top:718px;width:1220px;height:2px;background:#f8f8f8"></div>
<div id="status">DDS | 0xB2D882 | 00000000 | 6C3728C4 | 139191B0 | 0739555E | 00000000 | 00010774 | 000555F0 | 0001FFFF added to project.</div>
</body>
</html>
